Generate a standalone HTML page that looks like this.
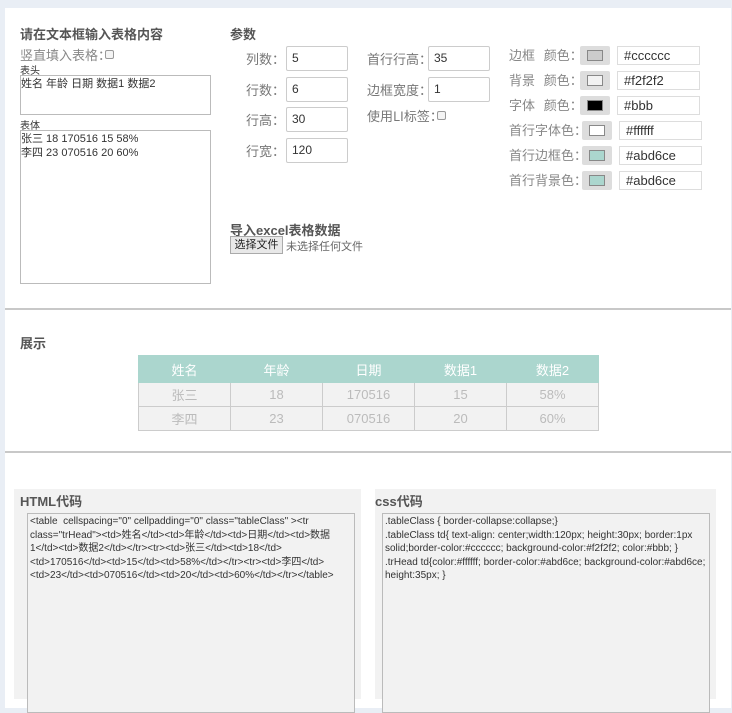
<!DOCTYPE html>
<html><head><meta charset="utf-8"><style>
*{margin:0;padding:0;box-sizing:border-box}
body{width:732px;height:693px;background:#e9eef5;font-family:"Liberation Sans","Noto Sans CJK SC",sans-serif;color:#555;position:relative;overflow:hidden;font-size:12px}
.panel{position:absolute;left:5px;top:8px;width:726px;height:700px;background:#fff}
.a{position:absolute;white-space:nowrap}
.cjk{font-family:"Noto Sans CJK SC",sans-serif}
.h{font-weight:bold;font-size:13px;color:#555}
.ta{position:absolute;border:1px solid #bbb;background:#fff;font-size:11px;color:#333;padding:1px 0;line-height:14px;overflow:hidden}
.in{position:absolute;border:1px solid #ccc;border-radius:2px;background:#fff;font-size:12px;color:#333;padding:4px 5px;height:25px}
.lbl{position:absolute;font-size:13px;color:#777;text-align:right;font-family:"Noto Sans CJK SC",sans-serif;line-height:16px;white-space:nowrap}
.sw{position:absolute;width:30px;height:19px;background:#ddd;border-radius:2px}
.sw i{position:absolute;left:7px;top:4px;width:16px;height:11px;border:1px solid #888}
.ti{position:absolute;width:83px;height:19px;border:1px solid #ddd;font-size:13px;color:#333;padding:0 6px;line-height:17px}
.cl{position:absolute;font-size:13px;color:#888;font-family:"Noto Sans CJK SC",sans-serif;line-height:18px;white-space:nowrap}
.hr{position:absolute;left:5px;width:726px;height:2px;background:#c8c8c8}
table{position:absolute;left:138px;top:355px;border-collapse:collapse;font-size:13px;color:#bbb}
td{width:92px;height:24px;text-align:center;border:1px solid #ccc;background:#f2f2f2}
tr.th td{background:#abd6ce;border-color:#abd6ce;color:#fff;height:27px}
.cb{position:absolute;width:9px;height:9px;border:1px solid #999;border-radius:2px;background:#f4f4f4}
.code{position:absolute;background:#f2f2f2}
.code .ta{background:#f2f2f2;font-size:10px;line-height:13.5px;color:#333;padding:1px 2px}
</style></head><body>
<div class="panel"></div>
<div class="a h" style="left:20px;top:24px">请在文本框输入表格内容</div>
<div class="a cjk" style="left:20px;top:45px;font-size:13px;color:#888">竖直填入表格：</div>
<div class="cb" style="left:105px;top:50px"></div>
<div class="a" style="left:20px;top:62px;font-size:10px;color:#333">表头</div>
<div class="ta" style="left:20px;top:75px;width:191px;height:40px">姓名 年龄 日期 数据1 数据2</div>
<div class="a" style="left:20px;top:117px;font-size:10px;color:#333">表体</div>
<div class="ta" style="left:20px;top:130px;width:191px;height:154px">张三 18 170516 15 58%<br>李四 23 070516 20 60%</div>

<div class="a h" style="left:230px;top:24px">参数</div>
<div class="lbl" style="left:235px;top:51px;width:50px">列数：</div><div class="in" style="left:286px;top:46px;width:62px">5</div>
<div class="lbl" style="left:235px;top:82px;width:50px">行数：</div><div class="in" style="left:286px;top:77px;width:62px">6</div>
<div class="lbl" style="left:235px;top:112px;width:50px">行高：</div><div class="in" style="left:286px;top:107px;width:62px">30</div>
<div class="lbl" style="left:235px;top:143px;width:50px">行宽：</div><div class="in" style="left:286px;top:138px;width:62px">120</div>

<div class="lbl" style="left:367px;top:51px;text-align:left">首行行高：</div><div class="in" style="left:428px;top:46px;width:62px">35</div>
<div class="lbl" style="left:367px;top:82px;text-align:left">边框宽度：</div><div class="in" style="left:428px;top:77px;width:62px">1</div>
<div class="lbl" style="left:367px;top:108px;text-align:left">使用LI标签：</div><div class="cb" style="left:437px;top:111px"></div>

<div class="cl" style="left:509px;top:46px">边框&nbsp;&nbsp;&nbsp;颜色：</div><div class="sw" style="left:580px;top:46px"><i style="background:#ccc"></i></div><div class="ti" style="left:617px;top:46px">#cccccc</div>
<div class="cl" style="left:509px;top:71px">背景&nbsp;&nbsp;&nbsp;颜色：</div><div class="sw" style="left:580px;top:71px"><i style="background:#f2f2f2"></i></div><div class="ti" style="left:617px;top:71px">#f2f2f2</div>
<div class="cl" style="left:509px;top:96px">字体&nbsp;&nbsp;&nbsp;颜色：</div><div class="sw" style="left:580px;top:96px"><i style="background:#000"></i></div><div class="ti" style="left:617px;top:96px">#bbb</div>
<div class="cl" style="left:509px;top:121px">首行字体色：</div><div class="sw" style="left:582px;top:121px"><i style="background:#fff"></i></div><div class="ti" style="left:619px;top:121px">#ffffff</div>
<div class="cl" style="left:509px;top:146px">首行边框色：</div><div class="sw" style="left:582px;top:146px"><i style="background:#abd6ce"></i></div><div class="ti" style="left:619px;top:146px">#abd6ce</div>
<div class="cl" style="left:509px;top:171px">首行背景色：</div><div class="sw" style="left:582px;top:171px"><i style="background:#abd6ce"></i></div><div class="ti" style="left:619px;top:171px">#abd6ce</div>

<div class="a h" style="left:230px;top:220px">导入excel表格数据</div>
<div class="a" style="left:230px;top:236px;width:53px;height:18px;border:1px solid #aaa;background:#e8e8e8;font-size:11px;color:#222;text-align:center;line-height:16px">选择文件</div>
<div class="a" style="left:286px;top:238px;font-size:11px;color:#666">未选择任何文件</div>

<div class="hr" style="top:308px"></div>
<div class="a h" style="left:20px;top:333px">展示</div>
<table>
<tr class="th"><td>姓名</td><td>年龄</td><td>日期</td><td>数据1</td><td>数据2</td></tr>
<tr><td>张三</td><td>18</td><td>170516</td><td>15</td><td>58%</td></tr>
<tr><td>李四</td><td>23</td><td>070516</td><td>20</td><td>60%</td></tr>
</table>
<div class="hr" style="top:451px"></div>

<div class="code" style="left:14px;top:489px;width:347px;height:210px">
<div class="a h" style="left:6px;top:2px">HTML代码</div>
<div class="ta" style="left:13px;top:24px;width:328px;height:200px">&lt;table&nbsp; cellspacing="0" cellpadding="0" class="tableClass" &gt;&lt;tr class="trHead"&gt;&lt;td&gt;姓名&lt;/td&gt;&lt;td&gt;年龄&lt;/td&gt;&lt;td&gt;日期&lt;/td&gt;&lt;td&gt;数据1&lt;/td&gt;&lt;td&gt;数据2&lt;/td&gt;&lt;/tr&gt;&lt;tr&gt;&lt;td&gt;张三&lt;/td&gt;&lt;td&gt;18&lt;/td&gt;&lt;td&gt;170516&lt;/td&gt;&lt;td&gt;15&lt;/td&gt;&lt;td&gt;58%&lt;/td&gt;&lt;/tr&gt;&lt;tr&gt;&lt;td&gt;李四&lt;/td&gt;&lt;td&gt;23&lt;/td&gt;&lt;td&gt;070516&lt;/td&gt;&lt;td&gt;20&lt;/td&gt;&lt;td&gt;60%&lt;/td&gt;&lt;/tr&gt;&lt;/table&gt;</div>
</div>
<div class="code" style="left:375px;top:489px;width:341px;height:210px">
<div class="a h" style="left:0px;top:2px">css代码</div>
<div class="ta" style="left:7px;top:24px;width:328px;height:200px;white-space:normal">.tableClass { border-collapse:collapse;}<br>.tableClass td{ text-align: center;width:120px; height:30px; border:1px solid;border-color:#cccccc; background-color:#f2f2f2; color:#bbb; }<br>.trHead td{color:#ffffff; border-color:#abd6ce; background-color:#abd6ce; height:35px; }</div>
</div>
</body></html>
